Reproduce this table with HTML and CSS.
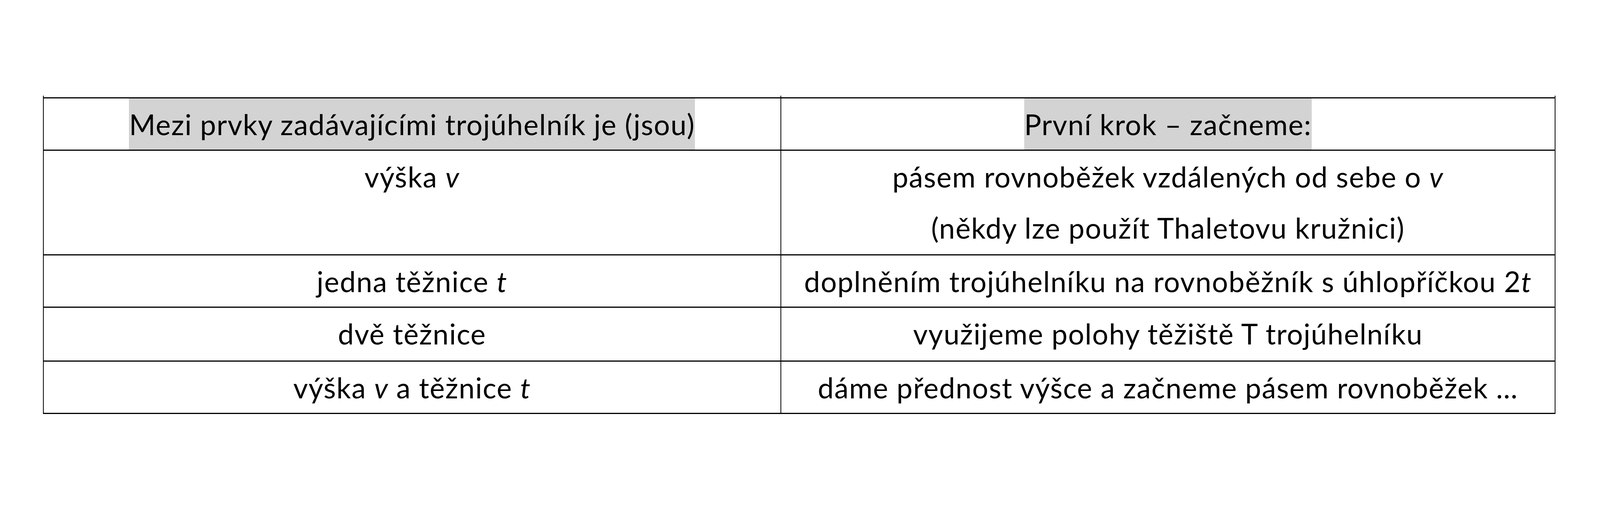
FILE: index.html
```html
<!DOCTYPE html>
<html lang="cs">
<head>
<meta charset="utf-8">
<title>Trojúhelník</title>
<link rel="stylesheet" href="styles.css">
</head>
<body>
<div class="page">
  <div class="table">
    <div class="cell"><span class="hl">Mezi prvky zadávajícími trojúhelník je (jsou)</span></div>
    <div class="cell"><span class="hl">První krok – začneme:</span></div>
    <div class="cell">výška <i>v</i></div>
    <div class="cell">pásem rovnoběžek vzdálených od sebe o <i>v</i><br>(někdy lze použít Thaletovu kružnici)</div>
    <div class="cell">jedna těžnice <i>t</i></div>
    <div class="cell">doplněním trojúhelníku na rovnoběžník s úhlopříčkou 2<i>t</i></div>
    <div class="cell">dvě těžnice</div>
    <div class="cell">využijeme polohy těžiště T trojúhelníku</div>
    <div class="cell">výška <i>v</i> a těžnice <i>t</i></div>
    <div class="cell">dáme přednost výšce a začneme pásem rovnoběžek …</div>
  </div>
</div>
</body>
</html>
```
FILE: styles.css
```css
:root {
  --u: calc(100vw / 5405);
  --v: calc(100vh / 1293);
}
html, body {
  margin: 0;
  background: #fff;
  overflow: hidden;
}
.page {
  padding: calc(249 * var(--v)) 0 0 calc(145 * var(--u));
}
.table {
  position: relative;
  display: grid;
  grid-template-columns: calc(2488 * var(--u)) calc(2613 * var(--u));
  grid-template-rows: calc(131 * var(--v)) calc(265 * var(--v)) calc(131 * var(--v)) calc(135 * var(--v)) calc(131 * var(--v));
  row-gap: calc(3 * var(--v));
  column-gap: calc(3 * var(--u));
  padding: calc(3 * var(--v)) calc(3 * var(--u));
  background: #000;
  width: max-content;
}
.table::before,
.table::after {
  content: "";
  position: absolute;
  left: 0;
  right: 0;
  background:
    linear-gradient(#000, #000) 0 0 / calc(3 * var(--u)) 100% no-repeat,
    linear-gradient(#000, #000) calc(2491 * var(--u)) 0 / calc(3 * var(--u)) 100% no-repeat,
    linear-gradient(#000, #000) 100% 0 / calc(3 * var(--u)) 100% no-repeat;
}
.table::before {
  top: calc(-4 * var(--v));
  height: calc(4 * var(--v));
}
.table::after {
  bottom: calc(-3 * var(--v));
  height: calc(3 * var(--v));
}
.cell {
  background: #fff;
  text-align: center;
  font-family: Lato, "Open Sans", sans-serif;
  font-size: calc(96 * var(--u));
  letter-spacing: calc(2.1 * var(--u));
  line-height: calc(131 * var(--v));
  color: #000;
  white-space: nowrap;
}
.hl {
  display: inline-block;
  background: #d3d3d3;
}
```
